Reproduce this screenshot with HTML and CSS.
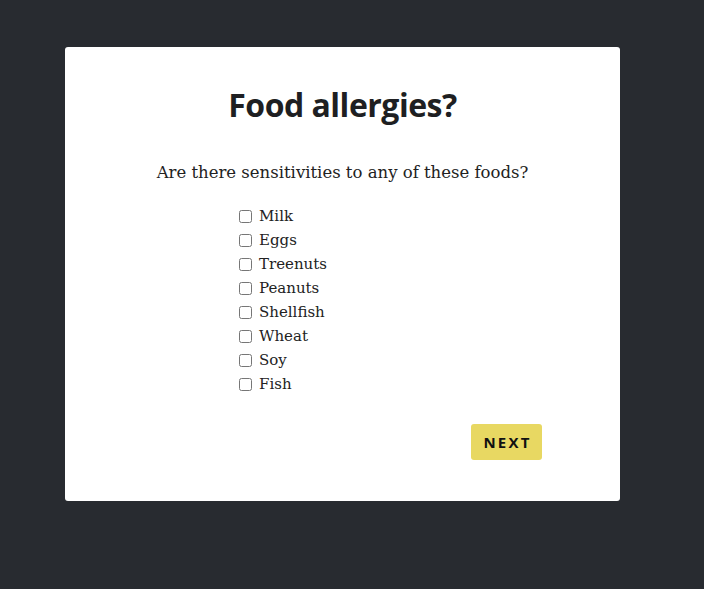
FILE: index.html
```html
<!DOCTYPE html>
<html>
<head>
<meta charset="utf-8">
<link rel="stylesheet" href="styles.css">
</head>
<body>
<div class="card">
  <h1 class="title">Food allergies?</h1>
  <p class="question">Are there sensitivities to any of these foods?</p>
  <ul class="options">
    <li><label><input type="checkbox"> Milk</label></li>
    <li><label><input type="checkbox"> Eggs</label></li>
    <li><label><input type="checkbox"> Treenuts</label></li>
    <li><label><input type="checkbox"> Peanuts</label></li>
    <li><label><input type="checkbox"> Shellfish</label></li>
    <li><label><input type="checkbox"> Wheat</label></li>
    <li><label><input type="checkbox"> Soy</label></li>
    <li><label><input type="checkbox"> Fish</label></li>
  </ul>
  <div class="actions"><button class="next">NEXT</button></div>
</div>
</body>
</html>
```
FILE: styles.css
```css
html, body {
  margin: 0;
  background: #282b30;
  height: 100%;
}
body {
  padding: 47px 0 0 65px;
  box-sizing: border-box;
}
.card {
  width: 555px;
  height: 454px;
  background: #ffffff;
  border-radius: 3px;
  box-sizing: border-box;
  padding-top: 38px;
}
.title {
  margin: 0;
  text-align: center;
  font-family: "Open Sans", sans-serif;
  font-weight: 700;
  font-size: 32px;
  line-height: 40px;
  color: #1e1f22;
  letter-spacing: -0.5px;
}
.question {
  margin: 36px 0 0;
  text-align: center;
  font-family: "DejaVu Serif", serif;
  font-size: 16.5px;
  line-height: 24px;
  color: #222;
}
.options {
  list-style: none;
  margin: 19px 0 0;
  padding: 0 0 0 173px;
  font-family: "DejaVu Serif", serif;
  font-size: 15px;
  line-height: 24px;
  color: #222;
}
.options label {
  display: flex;
  align-items: center;
  gap: 7px;
}
.options input {
  margin: 0 0 0 1px;
  width: 13px;
  height: 13px;
}
.actions {
  display: flex;
  justify-content: flex-end;
  padding-right: 78px;
  margin-top: 28px;
}
.next {
  width: 71px;
  height: 36px;
  border: none;
  border-radius: 3px;
  background: #e8d862;
  color: #111;
  font-family: "Open Sans", sans-serif;
  font-weight: 700;
  font-size: 15px;
  letter-spacing: 2.2px;
  padding: 0 0 0 2px;
}
```
